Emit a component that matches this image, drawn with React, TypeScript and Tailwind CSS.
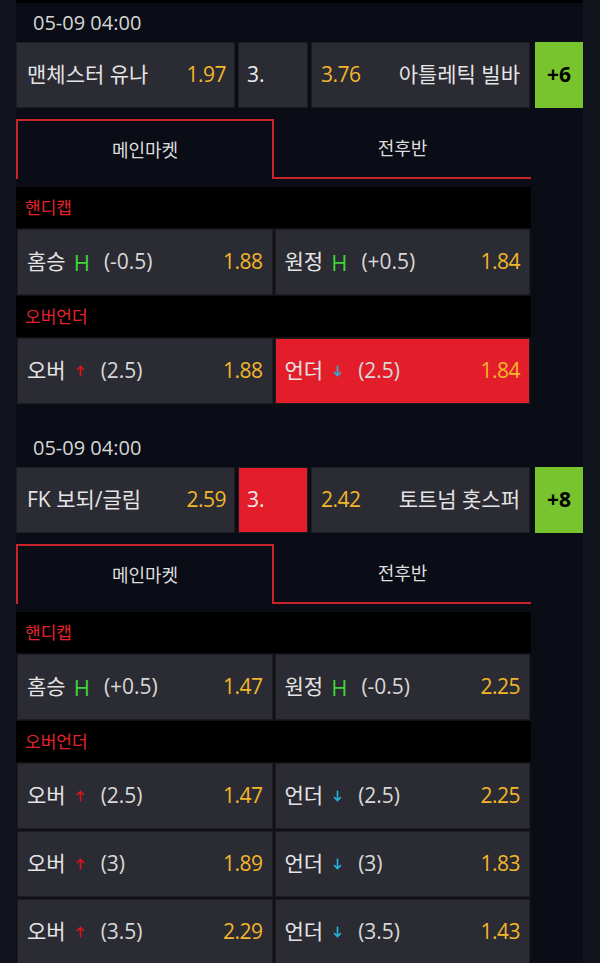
import React from "react";

type Sel = { label: string; kind: "H" | "up" | "down"; line: string; odds: string; active?: boolean };
type Match = {
  date: string;
  home: string;
  homeOdds: string;
  draw: string;
  drawActive?: boolean;
  awayOdds: string;
  away: string;
  more: string;
  handicap: [Sel, Sel];
  ou: [Sel, Sel][];
};

const matches: Match[] = [
  {
    date: "05-09 04:00",
    home: "맨체스터 유나",
    homeOdds: "1.97",
    draw: "3.",
    awayOdds: "3.76",
    away: "아틀레틱 빌바",
    more: "+6",
    handicap: [
      { label: "홈승", kind: "H", line: "(-0.5)", odds: "1.88" },
      { label: "원정", kind: "H", line: "(+0.5)", odds: "1.84" },
    ],
    ou: [
      [
        { label: "오버", kind: "up", line: "(2.5)", odds: "1.88" },
        { label: "언더", kind: "down", line: "(2.5)", odds: "1.84", active: true },
      ],
    ],
  },
  {
    date: "05-09 04:00",
    home: "FK 보되/글림",
    homeOdds: "2.59",
    draw: "3.",
    drawActive: true,
    awayOdds: "2.42",
    away: "토트넘 홋스퍼",
    more: "+8",
    handicap: [
      { label: "홈승", kind: "H", line: "(+0.5)", odds: "1.47" },
      { label: "원정", kind: "H", line: "(-0.5)", odds: "2.25" },
    ],
    ou: [
      [
        { label: "오버", kind: "up", line: "(2.5)", odds: "1.47" },
        { label: "언더", kind: "down", line: "(2.5)", odds: "2.25" },
      ],
      [
        { label: "오버", kind: "up", line: "(3)", odds: "1.89" },
        { label: "언더", kind: "down", line: "(3)", odds: "1.83" },
      ],
      [
        { label: "오버", kind: "up", line: "(3.5)", odds: "2.29" },
        { label: "언더", kind: "down", line: "(3.5)", odds: "1.43" },
      ],
    ],
  },
];

const font = { fontFamily: "'Open Sans', 'Noto Sans CJK KR', sans-serif" };

function UpArrow() {
  return (
    <svg width="9" height="12" viewBox="0 0 9 12" className="shrink-0">
      <path d="M4.5 11.5V1.5M1 5L4.5 1.5L8 5" stroke="#e0141c" strokeWidth="1.6" fill="none" />
    </svg>
  );
}

function DownArrow() {
  return (
    <svg width="9" height="12" viewBox="0 0 9 12" className="shrink-0">
      <path d="M4.5 0.5V10.5M1 7L4.5 10.5L8 7" stroke="#27b4dc" strokeWidth="1.6" fill="none" />
    </svg>
  );
}

function SelCell({ s }: { s: Sel }) {
  return (
    <div
      className={`flex-1 h-[66px] flex items-center pl-[9px] pr-[9px] border border-[#1c1c22] ${
        s.active ? "bg-[#e31e2a]" : "bg-[#2b2b33]"
      }`}
    >
      <span className="text-[21px] text-[#e4e4e4]">{s.label}</span>
      {s.kind === "H" ? (
        <span className="ml-[8px] text-[22px] text-[#3fd23a]">H</span>
      ) : (
        <span className="ml-[10px] flex items-center">{s.kind === "up" ? <UpArrow /> : <DownArrow />}</span>
      )}
      <span className={`${s.kind === "H" ? "ml-[14px]" : "ml-[16px]"} text-[21px] text-[#d8d8d8]`}>{s.line}</span>
      <span className="ml-auto text-[21px] tracking-[-0.5px] text-[#f2b62a]">{s.odds}</span>
    </div>
  );
}

function MatchBlock({ m }: { m: Match }) {
  return (
    <div>
      <div className="h-[39px] flex items-center pl-[17px] text-[20px] text-[#d6d6d6]">{m.date}</div>
      <div className="flex h-[66px]">
        <div className="w-[219px] flex items-center pl-[10px] pr-[8px] bg-[#2b2b33] border border-[#1c1c22]">
          <span className="text-[21px] text-[#e4e4e4]">{m.home}</span>
          <span className="ml-auto text-[21px] tracking-[-0.5px] text-[#f2b62a]">{m.homeOdds}</span>
        </div>
        <div
          className={`ml-[3px] w-[70px] flex items-center pl-[8px] border border-[#1c1c22] ${
            m.drawActive ? "bg-[#e31e2a]" : "bg-[#2b2b33]"
          }`}
        >
          <span className="text-[21px] text-[#ececec]">{m.draw}</span>
        </div>
        <div className="ml-[3px] w-[219px] flex items-center pl-[9px] pr-[9px] bg-[#2b2b33] border border-[#1c1c22]">
          <span className="text-[21px] tracking-[-0.5px] text-[#f2b62a]">{m.awayOdds}</span>
          <span className="ml-auto text-[21px] text-[#e4e4e4]">{m.away}</span>
        </div>
        <div className="ml-[5px] w-[48px] flex items-center justify-center bg-[#78c42f]">
          <span className="text-[21px] font-bold text-black">{m.more}</span>
        </div>
      </div>

      <div className="w-[515px]">
        <div className="mt-[11px] flex h-[60px]">
          <div className="w-[258px] flex items-center justify-center border-t-2 border-l-2 border-r-2 border-[#c9232c] text-[18px] text-[#dedede]">
            메인마켓
          </div>
          <div className="flex-1 flex items-center justify-center border-b-2 border-[#c9232c] text-[18px] text-[#dedede]">
            전후반
          </div>
        </div>

        <div className="mt-[8px] h-[41px] bg-black flex items-center pl-[9px] text-[17px] text-[#e5232c]">핸디캡</div>
        <div className="bg-[#111115] p-[1px] flex gap-[2px]">
          <SelCell s={m.handicap[0]} />
          <SelCell s={m.handicap[1]} />
        </div>

        <div className="h-[41px] bg-black flex items-center pl-[9px] text-[17px] text-[#e5232c]">오버언더</div>
        <div className="bg-[#111115] p-[1px] flex flex-col gap-[2px]">
          {m.ou.map((row, i) => (
            <div key={i} className="flex gap-[2px]">
              <SelCell s={row[0]} />
              <SelCell s={row[1]} />
            </div>
          ))}
        </div>
      </div>
    </div>
  );
}

export default function App() {
  return (
    <div className="w-[600px] h-[963px] overflow-hidden bg-[#10131c] flex" style={font}>
      <div className="ml-[16px] w-[567px] bg-[#0b0d16] border-t-[3px] border-black flex flex-col gap-[23px]">
        {matches.map((m, i) => (
          <MatchBlock key={i} m={m} />
        ))}
      </div>
    </div>
  );
}
